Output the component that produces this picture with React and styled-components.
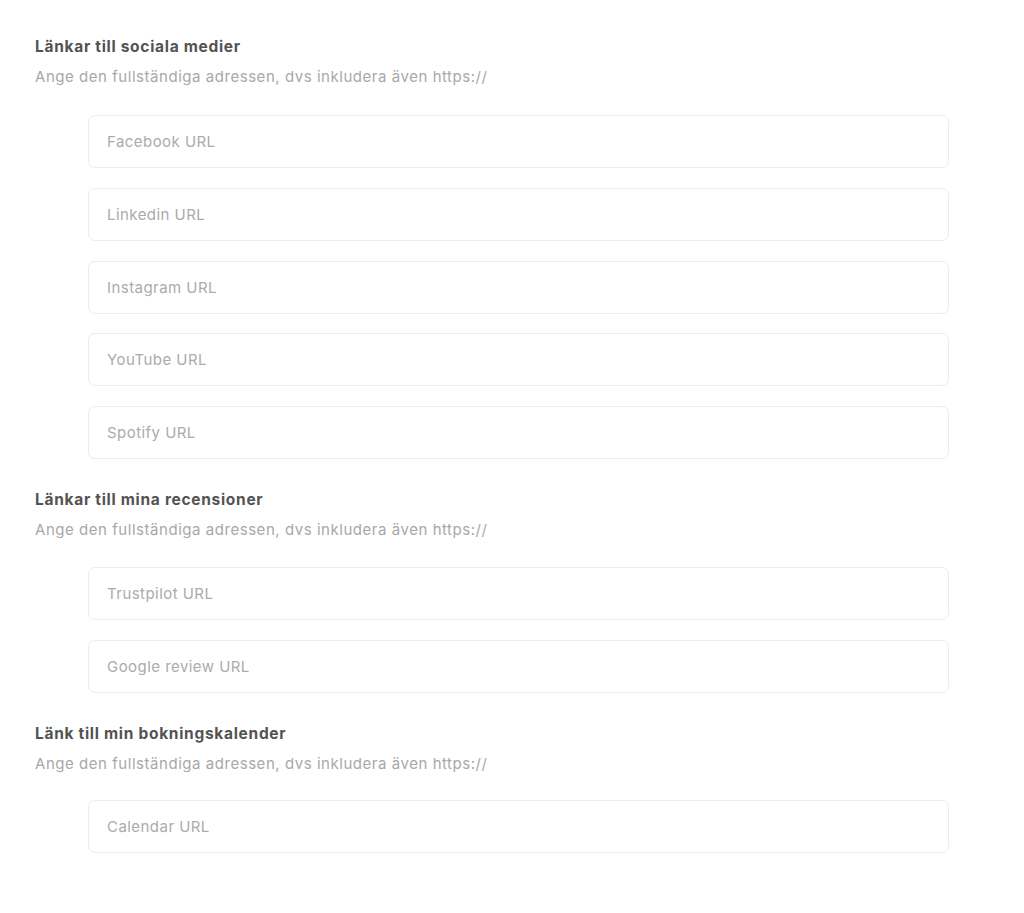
import React from "react";
import styled, { createGlobalStyle } from "styled-components";

const Global = createGlobalStyle`
  html, body { margin: 0; padding: 0; background: #ffffff; }
  body { font-family: "Inter", "Noto Sans", sans-serif; }
`;

const Page = styled.div`
  padding: 37px 75px 40px 35px;
  display: flex;
  flex-direction: column;
  gap: 31px;
`;

const Section = styled.section`
  display: flex;
  flex-direction: column;
`;

const Title = styled.h3`
  margin: 0;
  font-size: 15.5px;
  line-height: 20px;
  font-weight: 700;
  letter-spacing: 0.7px;
  color: #535353;
`;

const Hint = styled.p`
  margin: 10px 0 ${(p) => p.$gapBelow}px;
  font-size: 15px;
  line-height: 20px;
  font-weight: 400;
  letter-spacing: 0.54px;
  color: #a8a8a8;
`;

const Fields = styled.div`
  display: flex;
  flex-direction: column;
  gap: 19.75px;
  padding-left: 53px;
`;

const Input = styled.input`
  box-sizing: border-box;
  width: 100%;
  height: 53px;
  border: 1px solid #ececec;
  border-radius: 7px;
  padding: 0 18px;
  font-family: inherit;
  font-size: 15px;
  letter-spacing: 0.45px;
  color: #555;
  background: #fff;
  outline: none;
  &::placeholder { color: #ababab; }
`;

const sections = [
  { title: "Länkar till sociala medier", gap: 28, fields: ["Facebook URL", "Linkedin URL", "Instagram URL", "YouTube URL", "Spotify URL"] },
  { title: "Länkar till mina recensioner", gap: 27, fields: ["Trustpilot URL", "Google review URL"] },
  { title: "Länk till min bokningskalender", gap: 26, fields: ["Calendar URL"] },
];

export default function App() {
  return (
    <>
      <Global />
      <Page>
        {sections.map((s) => (
          <Section key={s.title}>
            <Title>{s.title}</Title>
            <Hint $gapBelow={s.gap}>Ange den fullständiga adressen, dvs inkludera även https://</Hint>
            <Fields>
              {s.fields.map((f) => (
                <Input key={f} placeholder={f} />
              ))}
            </Fields>
          </Section>
        ))}
      </Page>
    </>
  );
}
